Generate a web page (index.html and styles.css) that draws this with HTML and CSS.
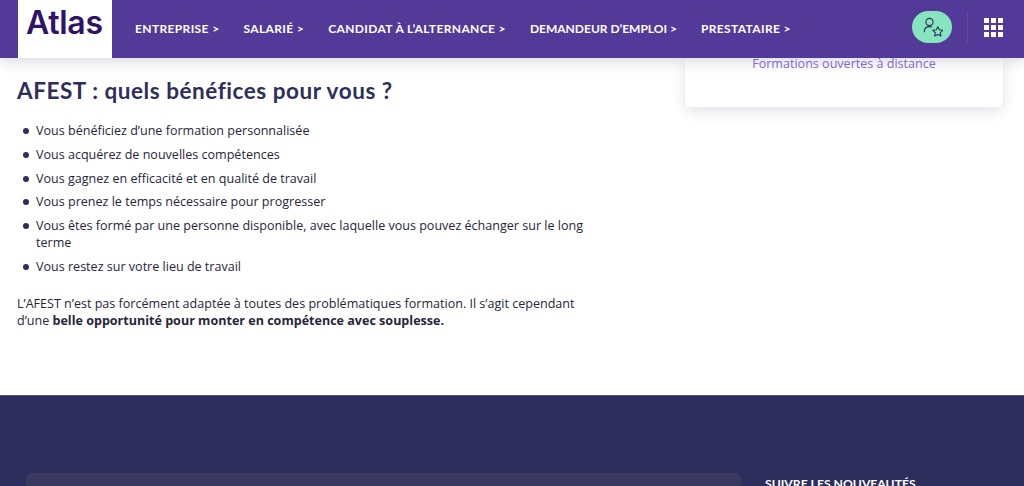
FILE: index.html
```html
<!DOCTYPE html>
<html lang="fr">
<head>
<meta charset="utf-8">
<title>AFEST</title>
<link rel="stylesheet" href="styles.css">
</head>
<body>
<header class="header">
  <a class="logo">Atlas</a>
  <nav class="nav">
    <a>ENTREPRISE &gt;</a>
    <a>SALARIÉ &gt;</a>
    <a>CANDIDAT À L’ALTERNANCE &gt;</a>
    <a class="nav-tight">DEMANDEUR D’EMPLOI &gt;</a>
    <a>PRESTATAIRE &gt;</a>
  </nav>
  <div class="tools">
    <a class="fav">
      <svg width="22" height="22" viewBox="0 0 22 22" fill="none" stroke="#2d2e5c" stroke-width="1.1" stroke-linecap="round" stroke-linejoin="round">
        <circle cx="8.5" cy="6" r="3.6"/>
        <path d="M3.3 15.7c0-3 2-5.1 5.2-5.1.8 0 1.5.1 2.1.4"/>
        <path d="M16.8 10.7l1.5 3.1 3.5.5-2.5 2.4.6 3.4-3.1-1.6-3.1 1.6.6-3.4-2.5-2.4 3.5-.5z"/>
      </svg>
    </a>
    <span class="sep"></span>
    <div class="apps">
      <i></i><i></i><i></i><i></i><i></i><i></i><i></i><i></i><i></i>
    </div>
  </div>
</header>
<main class="main">
  <article class="content">
    <h2 class="title">AFEST : quels bénéfices pour vous ?</h2>
    <ul class="list">
      <li>Vous bénéficiez d’une formation personnalisée</li>
      <li>Vous acquérez de nouvelles compétences</li>
      <li>Vous gagnez en efficacité et en qualité de travail</li>
      <li>Vous prenez le temps nécessaire pour progresser</li>
      <li>Vous êtes formé par une personne disponible, avec laquelle vous pouvez échanger sur le long terme</li>
      <li>Vous restez sur votre lieu de travail</li>
    </ul>
    <p class="para">L’AFEST n’est pas forcément adaptée à toutes des problématiques formation. Il s’agit cependant d’une <strong>belle opportunité pour monter en compétence avec souplesse.</strong></p>
  </article>
  <aside class="card">
    <a class="card-link">Formations ouvertes à distance</a>
  </aside>
</main>
<footer class="footer">
  <div class="panel"></div>
  <div class="follow">SUIVRE LES NOUVEAUTÉS</div>
</footer>
</body>
</html>
```
FILE: styles.css
```css
* { box-sizing: border-box; }
html, body { margin: 0; padding: 0; }
body {
  width: 1024px;
  height: 486px;
  overflow: hidden;
  background: #fff;
  font-family: "Open Sans", sans-serif;
  color: #26263a;
}
.header {
  position: relative;
  z-index: 2;
  height: 58px;
  background: #533a99;
  display: flex;
  align-items: stretch;
  padding-left: 18px;
  box-shadow: 0 2px 14px rgba(45, 46, 92, .22);
}
.logo {
  width: 94px;
  background: #fff;
  color: #2f1466;
  font-family: Inter, sans-serif;
  font-weight: 600;
  font-size: 32px;
  letter-spacing: -.3px;
  line-height: 46px;
  padding-left: 8px;
}
.nav {
  display: flex;
  align-items: center;
  gap: 24px;
  margin-left: 23px;
  padding-bottom: 2px;
  font-family: Lato, sans-serif;
  font-weight: 700;
  font-size: 12px;
  letter-spacing: .37px;
  color: #fff;
  white-space: nowrap;
}
.nav-tight { letter-spacing: 0; }
.tools {
  margin-left: auto;
  display: flex;
  align-items: center;
  padding: 0 21px 4px 0;
}
.fav {
  width: 40px;
  height: 32px;
  border-radius: 16px;
  background: #86e5bf;
  display: flex;
  align-items: center;
  justify-content: center;
}
.sep {
  width: 1px;
  height: 32px;
  margin: 0 16px 0 15px;
  background: #63499f;
}
.apps {
  width: 19px;
  display: grid;
  grid-template-columns: repeat(3, 5px);
  grid-auto-rows: 5px;
  gap: 2px;
}
.apps i { background: #fff; }
.main {
  display: flex;
  height: 337px;
  padding-left: 17px;
}
.content { width: 668px; }
.title {
  margin: 18px 0 0;
  font-family: Lato, sans-serif;
  font-weight: 700;
  font-size: 22.5px;
  line-height: 30px;
  letter-spacing: .54px;
  color: #2d2e5c;
}
.list {
  list-style: none;
  margin: 16px 0 0;
  padding: 0;
  width: 580px;
  font-size: 12.55px;
  line-height: 17px;
}
.list li {
  position: relative;
  padding-left: 19px;
  margin-bottom: 6.8px;
}
.list li::before {
  content: "";
  position: absolute;
  left: 6px;
  top: 6px;
  width: 6px;
  height: 6px;
  border-radius: 50%;
  background: #2d2e5c;
}
.para {
  margin: 19.6px 0 0;
  width: 580px;
  font-size: 12.55px;
  line-height: 17px;
}
.card {
  width: 318px;
  height: 49px;
  background: #fff;
  border-radius: 0 0 6px 6px;
  box-shadow: 0 4px 14px rgba(45, 46, 92, .14);
  text-align: center;
}
.card-link {
  display: block;
  margin-top: -3px;
  font-size: 12.55px;
  line-height: 17px;
  color: #8a6bdc;
}
.footer {
  height: 91px;
  background: #2d2e5c;
  border-top: 1px solid #55557d;
  display: flex;
  align-items: flex-start;
  padding: 77px 0 0 26px;
}
.panel {
  width: 715px;
  height: 13px;
  background: #3a3860;
  border-radius: 6px 6px 0 0;
}
.follow {
  margin-left: 24px;
  margin-top: 3px;
  font-family: Lato, sans-serif;
  font-weight: 700;
  font-size: 12.2px;
  line-height: 15px;
  color: #fff;
  white-space: nowrap;
}
```
